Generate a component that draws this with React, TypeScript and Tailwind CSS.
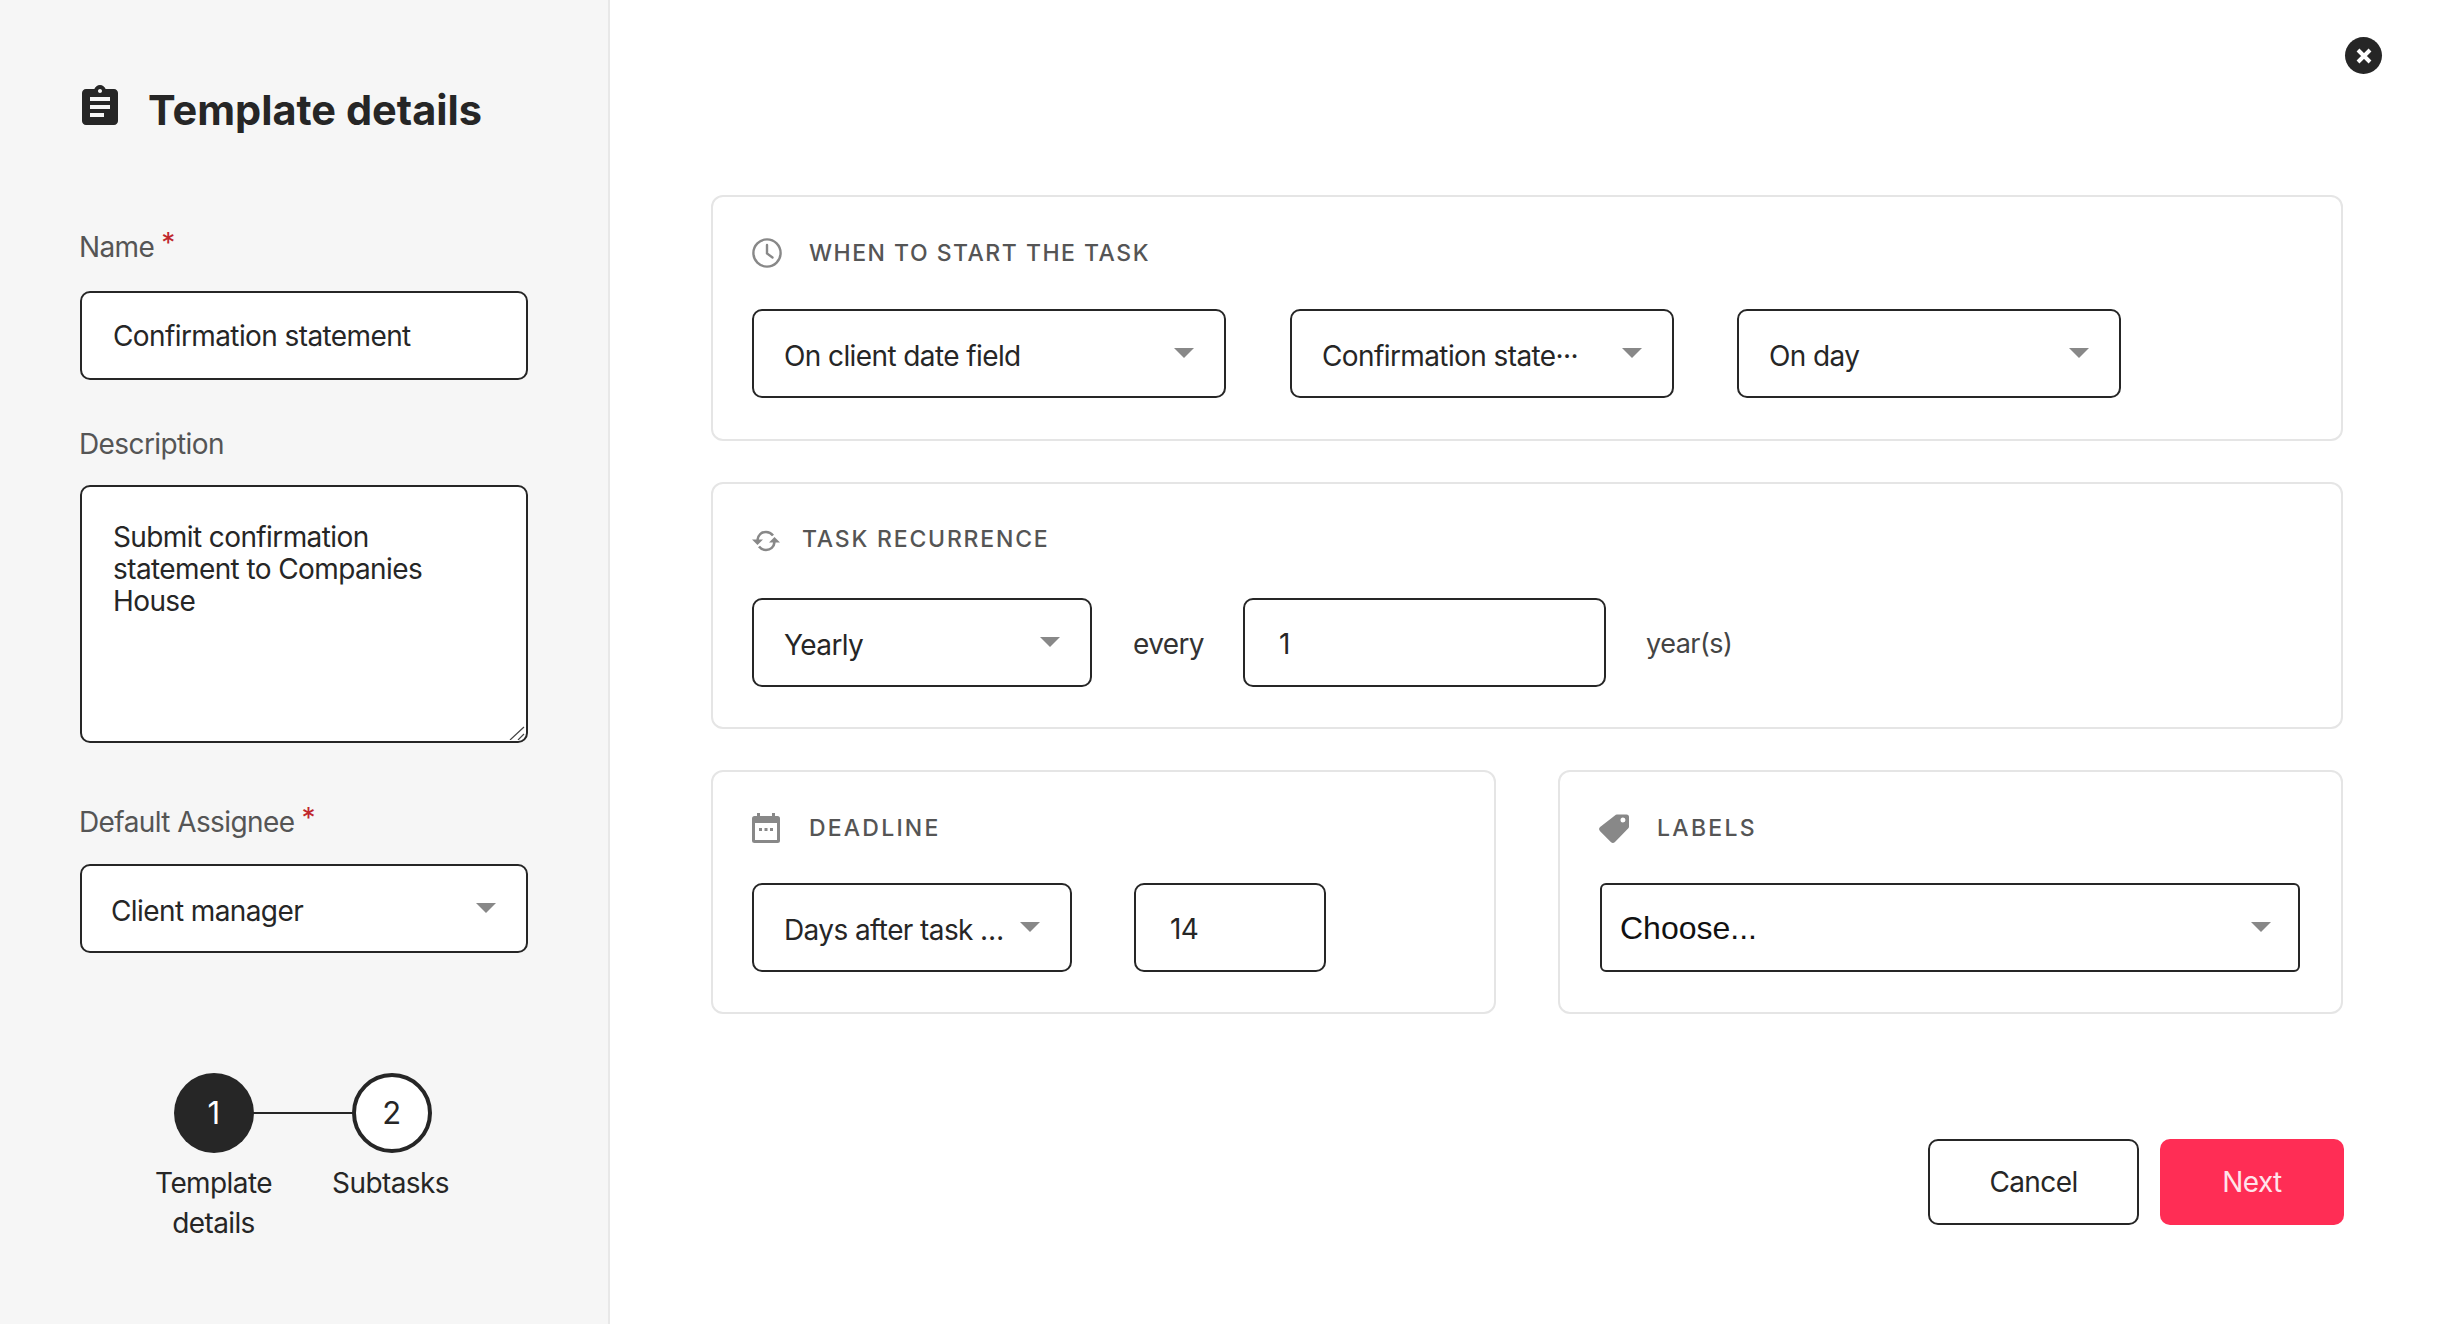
import type { ReactNode } from "react";

const font = { fontFamily: "Inter, 'Noto Sans', sans-serif" };

function Caret() {
  return (
    <svg width="20" height="10" viewBox="0 0 20 10" className="shrink-0 -mt-[2px]">
      <path d="M0 0h20L10 10z" fill="#888888" />
    </svg>
  );
}

function Select({ value, className }: { value: string; className: string }) {
  return (
    <div
      className={`flex items-center justify-between bg-white border-2 border-[#262626] rounded-[10px] h-[89px] text-[28px] tracking-[-0.6px] text-[#262626] whitespace-nowrap ${className}`}
    >
      <span className="pt-[5px]">{value}</span>
      <Caret />
    </div>
  );
}

function Field({ value, className }: { value: string; className: string }) {
  return (
    <div
      className={`flex items-center bg-white border-2 border-[#262626] rounded-[10px] h-[89px] text-[28px] tracking-[-0.6px] text-[#262626] ${className}`}
    >
      {value}
    </div>
  );
}

function Card({
  icon,
  title,
  gap,
  tracking,
  children,
  className,
}: {
  icon: ReactNode;
  title: string;
  gap: string;
  tracking: string;
  children: ReactNode;
  className: string;
}) {
  return (
    <section className={`bg-white border-2 border-[#e5e5e5] rounded-[12px] pl-[39px] ${className}`}>
      <div className="flex items-center h-[30px]">
        <div className={`flex justify-start ${gap}`}>{icon}</div>
        <h2 className={`text-[23px] leading-[30px] font-medium text-[#555555] uppercase ${tracking}`}>{title}</h2>
      </div>
      {children}
    </section>
  );
}

function Label({ text, required }: { text: string; required?: boolean }) {
  return (
    <label className="flex -ml-[1px] text-[28px] leading-[34px] tracking-[-0.6px] text-[#555555]">
      {text}
      {required && <span className="text-[#c0272d] ml-[7px] -mt-[4px]">*</span>}
    </label>
  );
}

export default function App() {
  return (
    <div className="relative flex w-full h-screen overflow-hidden bg-white" style={font}>
      {/* Left column */}
      <aside className="w-[610px] shrink-0 h-full bg-[#f6f6f6] border-r-2 border-[#e8e8e8] pl-[80px] pr-[80px] pt-[85px]">
        <div className="flex items-center h-[40px]">
          <svg width="36" height="40" viewBox="3 1 18 20" className="ml-[2px] mr-[30px] shrink-0">
            <path
              fill="#262626"
              d="M19 3h-4.18C14.4 1.84 13.3 1 12 1c-1.3 0-2.4.84-2.82 2H5c-1.1 0-2 .9-2 2v14c0 1.1.9 2 2 2h14c1.1 0 2-.9 2-2V5c0-1.1-.9-2-2-2zm-7 0c.55 0 1 .45 1 1s-.45 1-1 1-1-.45-1-1 .45-1 1-1zm2 14H7v-2h7v2zm3-4H7v-2h10v2zm0-4H7V7h10v2z"
            />
          </svg>
          <h1 className="pt-[10px] text-[41.500px] font-bold text-[#262626] leading-[50px] whitespace-nowrap">Template details</h1>
        </div>

        <div className="mt-[105px]">
          <Label text="Name" required />
        </div>
        <Field value="Confirmation statement" className="mt-[27px] pl-[31px] h-[86px]" />

        <div className="mt-[47px]">
          <Label text="Description" />
        </div>
        <div className="relative mt-[24px]">
          <textarea
            readOnly
            value="Submit confirmation statement to Companies House"
            className="block w-full h-[258px] resize-none bg-white border-2 border-[#262626] rounded-[10px] pl-[31px] pr-[31px] pt-[34px] text-[28px] leading-[32px] tracking-[-0.6px] text-[#262626] outline-none"
          />
          <svg width="16" height="14" viewBox="0 0 16 14" className="absolute right-[3px] bottom-[3px]" stroke="#444444" strokeWidth="1.2">
            <path d="M1 14L15 1M9 14l6-6" />
          </svg>
        </div>

        <div className="mt-[62px]">
          <Label text="Default Assignee" required />
        </div>
        <Select value="Client manager" className="mt-[25px] pl-[29px] pr-[30px] h-[88px]" />

        {/* Stepper */}
        <div className="relative flex justify-center w-[400px] ml-[22px] mt-[120px] text-[28px] leading-[40px] tracking-[-0.6px] text-[#262626] text-center">
          <div className="flex flex-col items-center w-[177px]">
            <div className="flex items-center justify-center w-[80px] h-[80px] rounded-full bg-[#262626] text-white text-[31px]">1</div>
            <div className="mt-[10px] w-[140px]">Template details</div>
          </div>
          <div className="flex flex-col items-center w-[177px]">
            <div className="relative z-10 left-[1px] flex items-center justify-center w-[80px] h-[80px] rounded-full bg-white border-[4px] border-[#262626] text-[31px]">2</div>
            <div className="mt-[10px]">Subtasks</div>
          </div>
          <div className="absolute left-[120px] top-[39px] w-[160px] h-[2px] bg-[#262626]" />
        </div>
      </aside>

      {/* Main */}
      <main className="flex-1 min-w-0 pl-[101px] pr-[100px] pt-[195px]">
        <Card
          title="When to start the task"
          gap="mr-[27px]"
          tracking="tracking-[1.5px]"
          className="h-[246px] pt-[41px]"
          icon={
            <svg width="30" height="30" viewBox="0 0 30 30" fill="none" stroke="#888888" strokeWidth="2.4" strokeLinecap="round">
              <circle cx="15" cy="15" r="13.6" />
              <path d="M15 7v8.5l5.5 4" />
            </svg>
          }
        >
          <div className="flex mt-[41px]">
            <Select value="On client date field" className="w-[474px] pl-[30px] pr-[30px]" />
            <Select value="Confirmation state···" className="w-[384px] ml-[64px] pl-[30px] pr-[30px]" />
            <Select value="On day" className="w-[384px] ml-[63px] pl-[30px] pr-[30px]" />
          </div>
        </Card>

        <Card
          title="Task recurrence"
          gap="mr-[22px]"
          tracking="tracking-[1.8px]"
          className="h-[247px] pt-[40px] mt-[41px]"
          icon={
            <svg width="28" height="24" viewBox="0 0 28 24" fill="none" className="mt-[4px]">
              <path d="M5.5 11C6 6 9.5 3 14 3c3 0 5 1 7 3.5" stroke="#888888" strokeWidth="2.6" />
              <path d="M0 10.5h11L5.500 16z" fill="#888888" />
              <path d="M22.500 13c-.5 5-4 8-8.500 8-3 0-5-1-7-3.500" stroke="#888888" strokeWidth="2.600" />
              <path d="M17 13.500h11L22.500 8z" fill="#888888" />
            </svg>
          }
        >
          <div className="flex items-center mt-[44px]">
            <Select value="Yearly" className="w-[340px] pl-[30px] pr-[30px]" />
            <span className="ml-[41px] pt-[2px] text-[28px] tracking-[-0.6px] text-[#333333]">every</span>
            <Field value="1" className="w-[363px] ml-[39px] pl-[34px] pt-[2px]" />
            <span className="ml-[40px] pt-[4px] text-[27px] tracking-[-0.5px] text-[#444444]">year(s)</span>
          </div>
        </Card>

        <div className="grid grid-cols-2 gap-x-[62px] mt-[41px]">
          <Card
            title="Deadline"
            gap="mr-[29px]"
            tracking="tracking-[2.2px]"
            className="h-[244px] pt-[41px]"
            icon={
              <svg width="28" height="30" viewBox="0 0 28 30">
                <path d="M5 0h3v4H5zM20 0h3v4h-3z" fill="#888888" />
                <rect x="0" y="3" width="28" height="27" rx="2.500" fill="#888888" />
                <rect x="3" y="10" width="22" height="17" fill="#ffffff" />
                <path d="M7 15h3v3H7zM12.500 15h3v3h-3zM18 15h3v3h-3z" fill="#888888" />
              </svg>
            }
          >
            <div className="flex mt-[40px]">
              <Select value="Days after task …" className="w-[320px] pl-[30px] pr-[30px]" />
              <Field value="14" className="w-[192px] ml-[62px] pl-[34px] pt-[2px]" />
            </div>
          </Card>

          <Card
            title="Labels"
            gap="mr-[28px]"
            tracking="tracking-[2.3px]"
            className="h-[244px] pt-[41px]"
            icon={
              <svg width="30" height="30" viewBox="0 0 30 30">
                <path
                  fillRule="evenodd"
                  d="M18 1.500h9.500A2.500 2.500 0 0 1 30 4v9.500a3 3 0 0 1-.9 2.100L16 28.900a3 3 0 0 1-4.200 0L1.100 18.200a3 3 0 0 1 0-4.200L15.900 2.400a3 3 0 0 1 2.100-.9zM24 4.500a2.500 2.500 0 1 0 0 5 2.500 2.500 0 0 0 0-5z"
                  fill="#888888"
                />
              </svg>
            }
          >
            <div className="mt-[40px] ml-[1px] pr-[41px]">
              <div
                className="flex items-center justify-between h-[89px] bg-white border-2 border-[#262626] rounded-[6px] pl-[18px] pr-[27px] text-[32px] text-[#111111]"
                style={{ fontFamily: "'Liberation Sans', Arial, sans-serif" }}
              >
                <span>Choose...</span>
                <Caret />
              </div>
            </div>
          </Card>
        </div>

        <div className="flex justify-end gap-[21px] -mr-[1px] mt-[125px]">
          <button type="button" className="w-[211px] h-[86px] bg-white border-2 border-[#262626] rounded-[10px] text-[28px] tracking-[-0.6px] text-[#262626]">
            Cancel
          </button>
          <button type="button" className="w-[184px] h-[86px] bg-[#ff2d55] rounded-[10px] text-[28px] tracking-[-0.6px] text-[#ffe4ea]">
            Next
          </button>
        </div>
      </main>

      {/* Close button */}
      <button type="button" aria-label="Close" className="absolute left-[2345px] top-[37px] flex items-center justify-center w-[37px] h-[37px] rounded-full bg-[#262626]">
        <svg width="18" height="18" viewBox="0 0 18 18" stroke="#ffffff" strokeWidth="4">
          <path d="M3 3l12 12M15 3L3 15" />
        </svg>
      </button>
    </div>
  );
}
